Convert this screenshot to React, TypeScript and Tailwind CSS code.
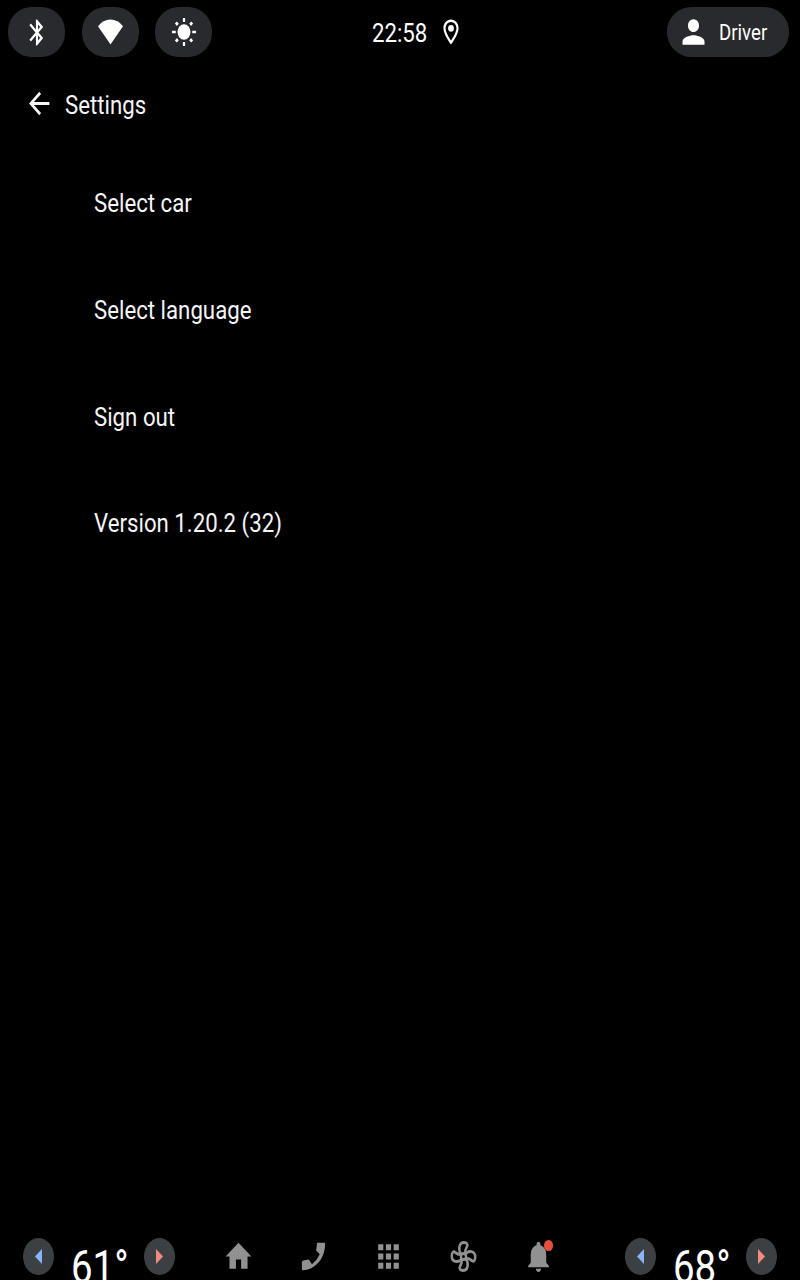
import type { ReactNode } from "react";

type GlyphProps = { d: string; className: string };

function Glyph({ d, className }: GlyphProps) {
  return (
    <svg viewBox="0 0 24 24" preserveAspectRatio="none" fill="currentColor" className={`shrink-0 ${className}`}>
      <path d={d} />
    </svg>
  );
}

const icons = {
  bluetooth:
    "M17.71 7.71L12 2h-1v7.59L6.41 5 5 6.41 10.59 12 5 17.59 6.41 19 11 14.41V22h1l5.71-5.71-4.3-4.29 4.3-4.29zM13 5.83l1.88 1.88L13 9.59V5.83zm1.88 10.46L13 18.17v-3.76l1.88 1.88z",
  person:
    "M12 12c2.21 0 4-1.79 4-4s-1.79-4-4-4-4 1.79-4 4 1.79 4 4 4zm0 2c-2.67 0-8 1.34-8 4v2h16v-2c0-2.66-5.33-4-8-4z",
  place:
    "M12 2C8.13 2 5 5.13 5 9c0 5.25 7 13 7 13s7-7.75 7-13c0-3.87-3.13-7-7-7zM7 9c0-2.76 2.24-5 5-5s5 2.24 5 5c0 2.88-2.88 7.19-5 9.88C9.92 16.21 7 11.85 7 9zM12 6.3a2.7 2.7 0 1 0 0 5.4a2.7 2.7 0 1 0 0-5.4z",
  back: "M20 11H7.83l5.59-5.59L12 4l-8 8 8 8 1.41-1.41L7.83 13H20v-2z",
  home: "M10 20v-6h4v6h5v-8h3L12 3 2 12h3v8z",
  phone:
    "M14.8 3.1H20.2Q21 3.1 21 4C20.9 13.6 12.8 20.7 3.7 20.9Q3 20.9 3 20.1V15.6Q3 14.9 3.7 14.8L7.8 14Q8.3 13.9 8.6 14.3L10.8 17.1Q14.7 14.6 16.8 10.5L14.4 8.5Q14 8.1 14.1 7.6L14.7 3.8z",
  apps: "M4 8h4V4H4v4zm6 12h4v-4h-4v4zm-6 0h4v-4H4v4zm0-6h4v-4H4v4zm6 0h4v-4h-4v4zm6-10v4h4V4h-4zm-6 4h4V4h-4v4zm6 6h4v-4h-4v4zm0 6h4v-4h-4v4z",
  bell: "M12 22c1.1 0 2-.9 2-2h-4c0 1.1.89 2 2 2zm6-6v-5c0-3.07-1.64-5.64-4.5-6.32V4c0-.83-.67-1.5-1.5-1.5s-1.5.67-1.5 1.5v.68C7.63 5.36 6 7.92 6 11v5l-2 2v1h16v-1l-2-2z",
};

const petal = "M-1.4 -1.4C-4.4 -3.6 -3.8 -9.1 0.4 -9.1C2.6 -9.1 3.5 -7.8 2.8 -6.6C2.2 -5.6 0.9 -4.6 1.4 -1.5";

function Fan() {
  return (
    <svg viewBox="-12 -12 24 24" preserveAspectRatio="none" fill="none" stroke="currentColor" strokeWidth="1.9" className="h-[37px] w-[31px]">
      {[0, 90, 180, 270].map((a) => (
        <path key={a} d={petal} transform={`rotate(${a})`} />
      ))}
      <circle r="2" />
    </svg>
  );
}

function Sun() {
  return (
    <svg viewBox="0 0 24 28" preserveAspectRatio="none" fill="currentColor" className="h-7 w-6">
      <ellipse cx="12" cy="14" rx="6.5" ry="7.8" />
      <path d="M10.9 0h2.2v4h-2.2zM10.9 24h2.2v4h-2.2zM0 12.8h3.8v2.4H0zM20.2 12.8H24v2.4h-3.8z" />
      <path d="M4.8 3.4l2 2.4-1.9 2.2-2-2.4zM19.2 3.4l-2 2.4 1.9 2.2 2-2.4zM4.8 24.6l2-2.4-1.9-2.2-2 2.4zM19.2 24.6l-2-2.4 1.9-2.2 2 2.4z" />
    </svg>
  );
}

function Pill({ children }: { children: ReactNode }) {
  return (
    <div className="flex h-[49.5px] w-[57px] items-center justify-center rounded-[24px] bg-[#282a2d]">{children}</div>
  );
}

function Label({ children }: { children: ReactNode }) {
  return <span className="block origin-left scale-x-[0.836] whitespace-nowrap">{children}</span>;
}

function Temperature({ value }: { value: string }) {
  return (
    <div className="flex w-[152px] shrink-0 items-start">
      <div className="flex h-[37px] w-[31px] shrink-0 items-center justify-center rounded-[50%] bg-[#3c4043] text-[#8ab4f8]">
        <Glyph d="M24 0v24L0 12z" className="h-[15px] w-[7px]" />
      </div>
      <div className="ml-[17px] mt-[2px] w-[73px] shrink-0 text-[46px] leading-[54px] text-white">
        <Label>{value}</Label>
      </div>
      <div className="flex h-[37px] w-[31px] shrink-0 items-center justify-center rounded-[50%] bg-[#3c4043] text-[#f28b82]">
        <Glyph d="M0 0v24l24-12z" className="h-[15px] w-[7px]" />
      </div>
    </div>
  );
}

const items = ["Select car", "Select language", "Sign out", "Version 1.20.2 (32)"];

export default function App() {
  return (
    <div className="flex h-[1280px] w-[800px] flex-col overflow-hidden bg-black font-['Roboto',sans-serif] text-[26.6px] leading-8 text-[#f5f5f5]">
      <header className="flex h-16 shrink-0 items-center pl-[8px] pr-[11px] text-white">
        <div className="flex gap-[16.7px]">
          <Pill>
            <Glyph d={icons.bluetooth} className="h-[31px] w-[26px]" />
          </Pill>
          <Pill>
            <svg viewBox="0 0 25 26" fill="currentColor" className="h-[26px] w-[25px]">
              <path d="M0 7.2Q5.2.6 12.5.6T25 7.2L12.5 25.6z" />
            </svg>
          </Pill>
          <Pill>
            <Sun />
          </Pill>
        </div>
        <div className="ml-[159.6px] flex items-center">
          <div className="w-[66.5px] pt-[2px]">
            <Label>22:58</Label>
          </div>
          <Glyph d={icons.place} className="h-[30px] w-[26px]" />
        </div>
        <div className="ml-auto flex h-[49.5px] w-[122px] items-center rounded-[24.5px] bg-[#282a2d] pl-[9.5px]">
          <Glyph d={icons.person} className="h-[38px] w-[33px]" />
          <div className="ml-[9.5px] text-[22.3px]">
            <Label>Driver</Label>
          </div>
        </div>
      </header>

      <div className="flex h-[86px] shrink-0 items-start pl-[23.5px] pt-[22px]">
        <Glyph d={icons.back} className="h-[35px] w-[30.5px]" />
        <h1 className="ml-[11px] pt-[3px]">
          <Label>Settings</Label>
        </h1>
      </div>

      <ul className="flex-1 pl-[94.2px]">
        {items.map((item) => (
          <li key={item} className="flex h-[106.67px] items-center">
            <Label>{item}</Label>
          </li>
        ))}
      </ul>

      <footer className="flex h-[42px] shrink-0 items-start pl-[23px] pr-[23px]">
        <Temperature value="61°" />
        <nav className="ml-[48px] flex gap-[44px] text-[#919191]">
          <Glyph d={icons.home} className="h-[37px] w-[31px]" />
          <Glyph d={icons.phone} className="h-[37px] w-[31px]" />
          <Glyph d={icons.apps} className="h-[37px] w-[31px]" />
          <Fan />
          <div className="relative">
            <Glyph d={icons.bell} className="h-[37px] w-[31px]" />
            <span className="absolute left-[21px] top-[2px] h-[10.5px] w-[8.7px] rounded-[50%] bg-[#e84e3c]" />
          </div>
        </nav>
        <div className="ml-auto">
          <Temperature value="68°" />
        </div>
      </footer>
    </div>
  );
}
